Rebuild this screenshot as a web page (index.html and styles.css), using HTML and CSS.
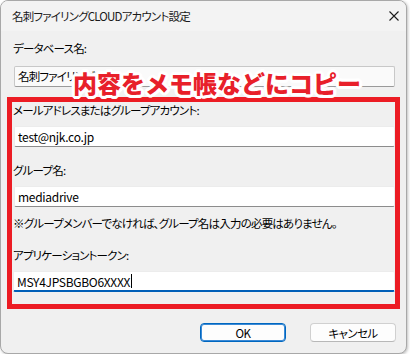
FILE: index.html
```html
<!DOCTYPE html>
<html lang="ja">
<head>
<meta charset="utf-8">
<link rel="stylesheet" href="styles.css">
</head>
<body>
<div class="window">
  <div class="titlebar">
    <span class="title">名刺ファイリングCLOUDアカウント設定</span>
    <svg class="close" width="10" height="10" viewBox="0 0 10 10"><path d="M0.5 0.5L9.5 9.5M9.5 0.5L0.5 9.5" stroke="#1b1b1b" stroke-width="1.1" fill="none"/></svg>
  </div>
  <div class="body">
    <div class="label">データベース名:</div>
    <div class="field readonly">名刺ファイリング</div>
    <div class="frame">
      <div class="label">メールアドレスまたはグループアカウント:</div>
      <div class="field">test@njk.co.jp</div>
      <div class="label gap">グループ名:</div>
      <div class="field">mediadrive</div>
      <div class="note">※グループメンバーでなければ、グループ名は入力の必要はありません。</div>
      <div class="label gap">アプリケーショントークン:</div>
      <div class="field focused">MSY4JPSBGBO6XXXX<span class="caret"></span></div>
    </div>
    <div class="buttons">
      <button class="btn default">OK</button>
      <button class="btn">キャンセル</button>
    </div>
  </div>
  <div class="callout">内容をメモ帳などにコピー</div>
</div>
</body>
</html>
```

FILE: styles.css
```css
* { box-sizing: border-box; }
html, body { margin: 0; padding: 0; background: #ffffff; }
body {
  font-family: "Noto Sans CJK JP", "Noto Sans", sans-serif;
  font-size: 11.5px;
  letter-spacing: -0.8px;
  color: #000;
  font-feature-settings: "palt";
}
.window {
  position: relative;
  width: 407px;
  height: 354px;
  background: #f0f0f0;
  border: 1px solid #a8a8a8;
  border-radius: 8px;
  box-shadow: 1px 1px 3px rgba(0,0,0,0.25);
  overflow: hidden;
}
.titlebar {
  height: 30px;
  background: #f3f3f3;
  display: flex;
  align-items: center;
  justify-content: space-between;
  padding: 0 7px 0 11px;
}
.title { font-size: 11.5px; line-height: 16px; color: #1a1a1a; }
.close { display: block; }
.body {
  padding: 9px 6px 0 6px;
  display: flex;
  flex-direction: column;
}
.label { line-height: 16px; padding-left: 6px; white-space: nowrap; }
.frame .label, .frame .note { padding-left: 1px; }
.field {
  margin-top: 10px;
  margin-left: 7px;
  width: 381px;
  height: 21px;
  background: #ffffff;
  border: 1px solid #ececec;
  border-bottom: 1px solid #8c8c8c;
  border-radius: 2px;
  padding-left: 3px;
  font-size: 12px;
  letter-spacing: -0.3px;
  line-height: 19px;
  white-space: nowrap;
  overflow: hidden;
  display: flex;
  align-items: center;
}
.field.readonly {
  background: #fafafa;
  border: 1px solid #c8c8c8;
  border-bottom-color: #9a9a9a;
  font-size: 11.5px;
  letter-spacing: -0.8px;
}
.frame {
  margin-top: 10px;
  width: 393px;
  border: 5px solid #ec1c24;
  padding: 0 0 12px 0;
  display: flex;
  flex-direction: column;
}
.frame .field { margin-top: 8px; margin-left: 2px; }
.frame .label.gap { margin-top: 15px; }
.note { margin-top: 8px; line-height: 16px; white-space: nowrap; }
.frame .note + .label.gap { margin-top: 16px; }
.field.focused {
  margin-left: 1px;
  width: 382px;
  border-bottom: 2px solid #005fb8;
}
.caret {
  display: inline-block;
  width: 1px;
  height: 14px;
  background: #000;
  margin-left: 1px;
}
.buttons {
  margin-top: 14px;
  display: flex;
  justify-content: flex-end;
  gap: 24px;
  padding-right: 4px;
}
.btn {
  width: 86px;
  height: 19px;
  padding: 0;
  font-family: inherit;
  font-size: 11.5px;
  letter-spacing: -0.6px;
  font-feature-settings: "palt";
  line-height: 16px;
  color: #000;
  background: #fdfdfd;
  border: 1px solid #d0d0d0;
  border-bottom-color: #b8b8b8;
  border-radius: 4px;
}
.btn.default {
  border: 1px solid #0067c0;
  box-shadow: inset 0 0 0 1px #3b8ad6;
  background: #fdfdfd;
}
.callout {
  position: absolute;
  left: 72px;
  top: 67px;
  font-size: 24px;
  font-weight: 900;
  line-height: 30px;
  letter-spacing: 0;
  color: #e8202a;
  white-space: nowrap;
  font-feature-settings: normal;
  text-shadow:
    2px 0 0 #fff, -2px 0 0 #fff, 0 2px 0 #fff, 0 -2px 0 #fff,
    3px 0 0 #fff, -3px 0 0 #fff, 0 3px 0 #fff, 0 -3px 0 #fff,
    2px 2px 0 #fff, -2px -2px 0 #fff, 2px -2px 0 #fff, -2px 2px 0 #fff,
    3px 1px 0 #fff, -3px -1px 0 #fff, 1px 3px 0 #fff, -1px -3px 0 #fff,
    3px -1px 0 #fff, -3px 1px 0 #fff, -1px 3px 0 #fff, 1px -3px 0 #fff;
}
```
